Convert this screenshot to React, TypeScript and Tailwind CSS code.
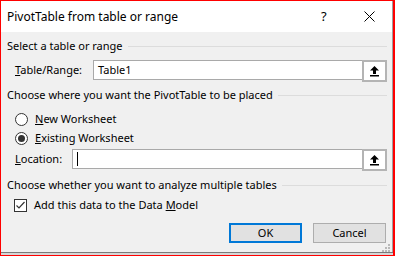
import React from "react";

const font = { fontFamily: '"Segoe UI", "Noto Sans", sans-serif' };

const UploadIcon = () => (
  <svg width="11" height="12" viewBox="0 0 11 12">
    <path d="M5.5 1 L10 5.5 L7 5.5 L7 9 L4 9 L4 5.5 L1 5.5 Z" fill="#000" />
    <rect x="1" y="10" width="9" height="1.5" fill="#000" />
  </svg>
);

const RefInput = ({ label, labelW, children }) => (
  <div className="flex items-center h-[20px] pl-[8px]">
    <div className={labelW}>{label}</div>
    <div className="flex-1 h-[20px] flex bg-white border border-[#a9a9a9]">
      <div className="flex-1 flex items-center pl-[4px]">{children}</div>
      <div className="w-[21px] h-full border-2 border-[#b4b4b4] bg-white flex items-center justify-center -my-px -mr-px box-content">
        <UploadIcon />
      </div>
    </div>
  </div>
);

const Section = ({ title, className }) => (
  <div className={"flex items-center h-[16px] " + className}>
    <span className="pr-[5px]">{title}</span>
    <div className="flex-1 h-px bg-[#dcdcdc]" />
  </div>
);

const Radio = ({ checked, children, className }) => (
  <div className={"flex items-center h-[16px] pl-[8px] " + className}>
    <div className="w-[13px] h-[13px] rounded-full border border-[#333] bg-white flex items-center justify-center">
      {checked && <div className="w-[7px] h-[7px] rounded-full bg-[#333]" />}
    </div>
    <span className="ml-[7px]">{children}</span>
  </div>
);

export default function App() {
  return (
    <div
      className="w-[395px] h-[256px] border-t border-l border-b border-r-2 border-[#ff0000] flex flex-col text-[11px] text-black"
      style={font}
    >
      <div className="h-[31px] bg-white flex items-center pl-[6px] border-r border-[#a0a0a0] text-[12px]">
        <span className="flex-1">PivotTable from table or range</span>
        <span className="w-[10px] text-[13px] mr-[33px]">?</span>
        <svg width="11" height="11" viewBox="0 0 11 11" className="mr-[17px]">
          <path d="M0.5 0.5 L10.5 10.5 M10.5 0.5 L0.5 10.5" stroke="#000" strokeWidth="1" />
        </svg>
      </div>
      <div className="flex-1 bg-[#f0f0f0] border-r border-[#a0a0a0] pl-[6px] pr-[5px] relative">
        <Section title="Select a table or range" className="mt-[6px]" />
        <div className="mt-[6px]">
          <RefInput label={<><u>T</u>able/Range:</>} labelW="w-[78px]">
            Table1
          </RefInput>
        </div>
        <Section title="Choose where you want the PivotTable to be placed" className="mt-[7px]" />
        <Radio className="mt-[8px]">
          <u>N</u>ew Worksheet
        </Radio>
        <Radio checked className="mt-[3px]">
          <u>E</u>xisting Worksheet
        </Radio>
        <div className="mt-[3px]">
          <RefInput label={<><u>L</u>ocation:</>} labelW="w-[57px]">
            <div className="w-px h-[14px] bg-black" />
          </RefInput>
        </div>
        <Section title="Choose whether you want to analyze multiple tables" className="mt-[8px]" />
        <div className="flex items-center h-[16px] pl-[7px] mt-[4px]">
          <div className="w-[13px] h-[13px] border border-[#333] bg-white flex items-center justify-center">
            <svg width="11" height="11" viewBox="0 0 11 11">
              <path d="M1.5 5.5 L4 8 L9.5 2" stroke="#333" strokeWidth="1.2" fill="none" />
            </svg>
          </div>
          <span className="ml-[7px]">
            Add this data to the Data <u>M</u>odel
          </span>
        </div>
        <div className="flex justify-end gap-[11px] mt-[10px] pr-px">
          <button className="w-[73px] h-[20px] bg-[#e1e1e1] border-2 border-[#0078d7] flex items-center justify-center">
            OK
          </button>
          <button className="w-[73px] h-[20px] bg-[#e1e1e1] border border-[#adadad] flex items-center justify-center">
            Cancel
          </button>
        </div>
        <svg width="9" height="8" viewBox="0 0 9 8" className="absolute right-[1px] bottom-0">
          <rect x="6" y="0" width="2" height="2" fill="#b8b8b8" />
          <rect x="3" y="3" width="2" height="2" fill="#b8b8b8" />
          <rect x="6" y="3" width="2" height="2" fill="#b8b8b8" />
          <rect x="0" y="6" width="2" height="2" fill="#b8b8b8" />
          <rect x="3" y="6" width="2" height="2" fill="#b8b8b8" />
          <rect x="6" y="6" width="2" height="2" fill="#b8b8b8" />
        </svg>
      </div>
      <div className="h-px bg-[#7a7a7a]" />
      <div className="h-[2px] bg-[#d6d6d6]" />
    </div>
  );
}
